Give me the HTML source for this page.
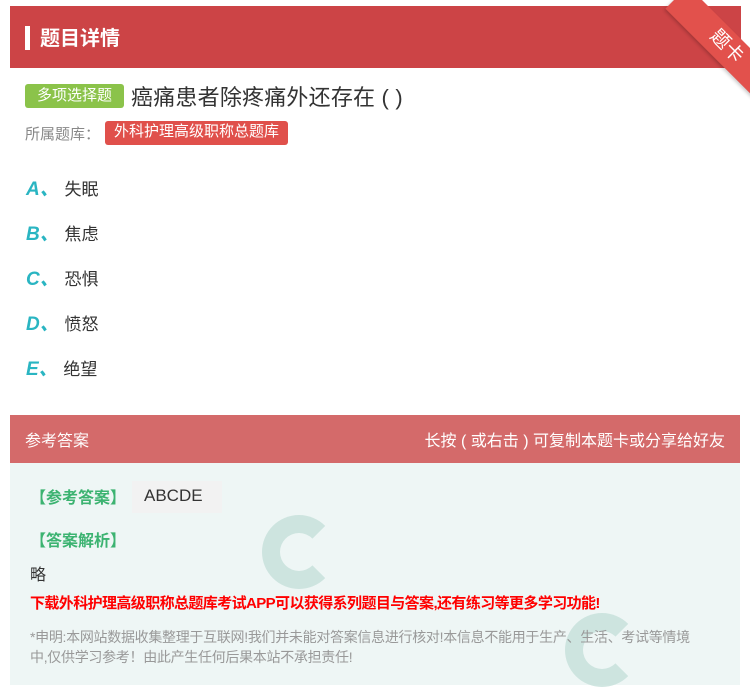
<!DOCTYPE html>
<html><head><meta charset="utf-8"><style>
*{margin:0;padding:0;box-sizing:border-box}
body{width:750px;height:685px;background:#fff;font-family:"Liberation Sans","Noto Sans CJK SC",sans-serif;position:relative;overflow:hidden}
.hdr{position:absolute;left:10px;top:6px;width:731px;height:62px;background:#cc4446}
.hdr .bar{position:absolute;left:15px;top:20px;width:5px;height:24px;background:#fff}
.hdr .t{position:absolute;left:30px;top:16px;color:#fff;font-size:20px;font-weight:bold}
.rib{position:absolute;left:688px;top:-14px;width:140px;height:32px;background:#e2514c;transform:rotate(45deg);transform-origin:0 0;color:#fff;font-size:19px;text-align:center;line-height:32px;box-shadow:0 2px 3px rgba(0,0,0,.2)}
.q{position:absolute;left:25px;top:80px;display:flex;align-items:center}
.tag{background:#8bc34a;color:#fff;font-size:15px;padding:1px 12px;border-radius:3px;height:24px;line-height:22px}
.qt{font-size:22px;color:#333;margin-left:7px;letter-spacing:0.2px}
.lib{position:absolute;left:25px;top:121px;font-size:15px;color:#888;display:flex;align-items:center}
.lib span{background:#e0504b;color:#fff;padding:0 9px;border-radius:3px;height:24px;line-height:22px;margin-left:5px}
.opt{position:absolute;left:26px;font-size:17px;color:#333}
.opt b{color:#2ab5c2;font-style:italic;font-size:19px;margin-right:1px}
.ans{position:absolute;left:10px;top:415px;width:730px;height:270px;background:#eef6f5}
.ah{height:48px;background:#d46a6a;color:#fff;font-size:16px;display:flex;justify-content:space-between;align-items:center;padding:0 15px}
.g{position:absolute;color:#3cb371;font-size:16px;font-weight:bold}
.circ{position:absolute;width:74px;height:74px;border-radius:50%;border:18px solid #c5e0da;border-right-color:transparent;opacity:.8}
</style></head><body>
<div class="hdr"><div class="bar"></div><div class="t">题目详情</div></div>
<div class="rib">题卡</div>
<div class="q"><div class="tag">多项选择题</div><div class="qt">癌痛患者除疼痛外还存在 ( )</div></div>
<div class="lib">所属题库：<span>外科护理高级职称总题库</span></div>
<div class="opt" style="top:174px"><b>A、</b> 失眠</div>
<div class="opt" style="top:219px"><b>B、</b> 焦虑</div>
<div class="opt" style="top:264px"><b>C、</b> 恐惧</div>
<div class="opt" style="top:309px"><b>D、</b> 愤怒</div>
<div class="opt" style="top:354px"><b>E、</b> 绝望</div>
<div class="ans">
<div class="ah"><span>参考答案</span><span>长按 ( 或右击 ) 可复制本题卡或分享给好友</span></div>
<div class="circ" style="left:252px;top:100px"></div>
<div class="circ" style="left:555px;top:198px"></div>
<div class="g" style="left:20px;top:69px">【参考答案】</div>
<div style="position:absolute;left:122px;top:66px;width:90px;height:32px;background:#f2f2f2;font-size:17px;color:#333;padding:5px 12px">ABCDE</div>
<div class="g" style="left:20px;top:112px">【答案解析】</div>
<div style="position:absolute;left:20px;top:146px;font-size:16px;color:#333">略</div>
<div style="position:absolute;left:20px;top:177px;font-size:15px;color:#f00;font-weight:bold;letter-spacing:-0.6px">下载外科护理高级职称总题库考试APP可以获得系列题目与答案,还有练习等更多学习功能!</div>
<div style="position:absolute;left:20px;top:212px;width:665px;font-size:14px;color:#999;line-height:20px;letter-spacing:-0.3px">*申明:本网站数据收集整理于互联网!我们并未能对答案信息进行核对!本信息不能用于生产、生活、考试等情境中,仅供学习参考！由此产生任何后果本站不承担责任!</div>
</div>
</body></html>
